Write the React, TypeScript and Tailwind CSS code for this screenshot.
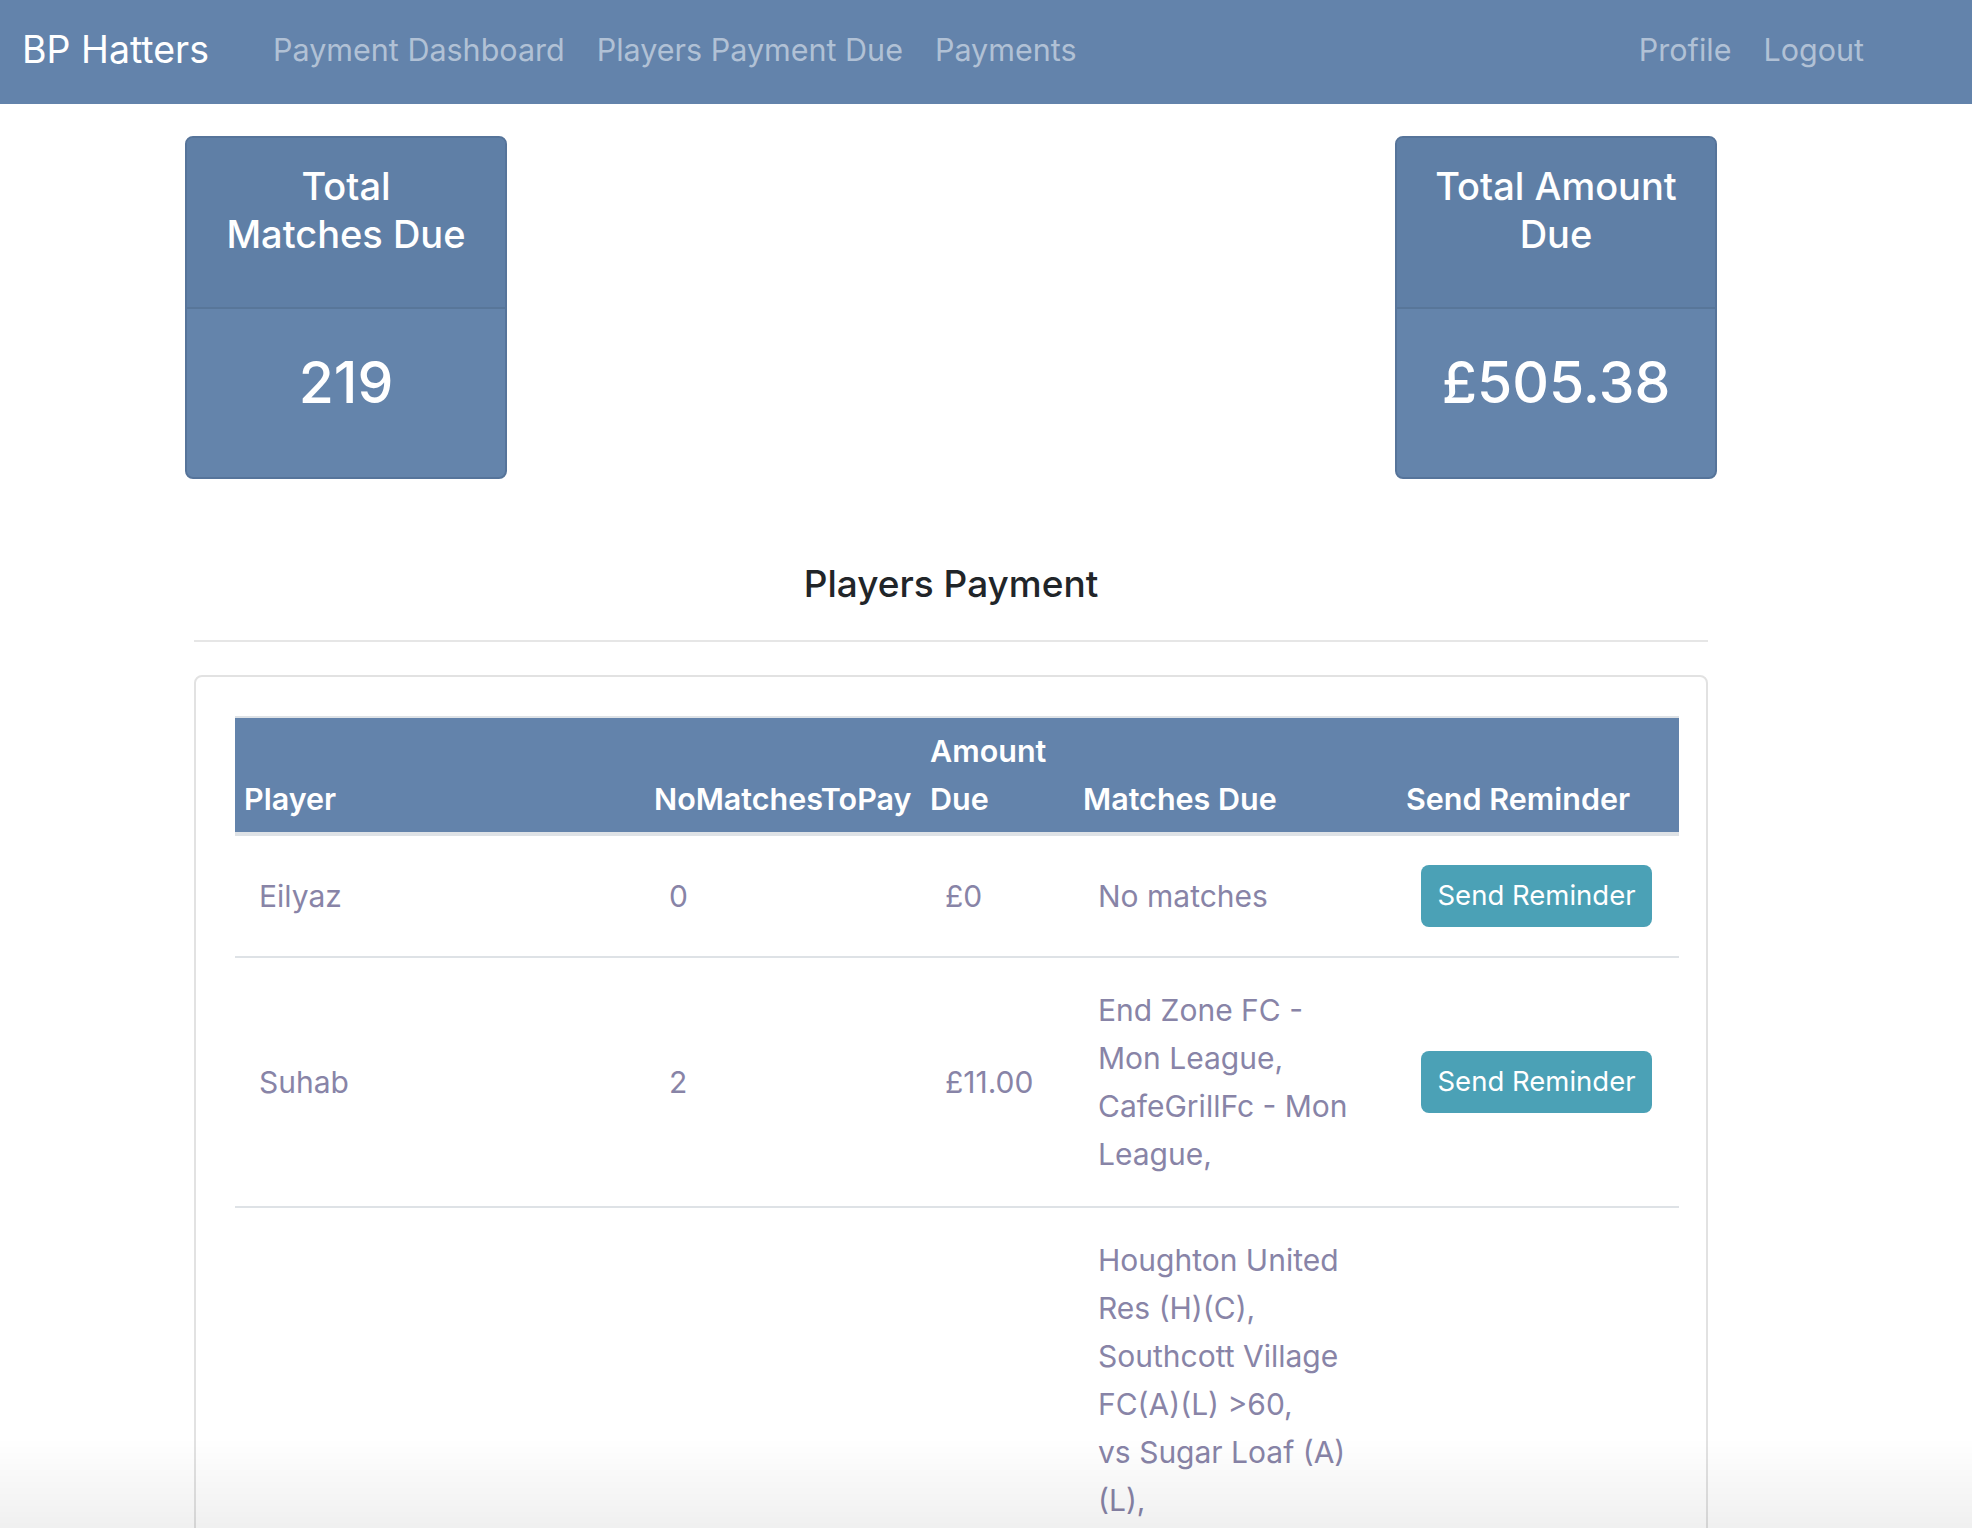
import React from "react";

type Row = {
  player: string;
  count: string;
  amount: string;
  matches: string[];
};

const rows: Row[] = [
  { player: "Eilyaz", count: "0", amount: "£0", matches: ["No matches"] },
  {
    player: "Suhab",
    count: "2",
    amount: "£11.00",
    matches: ["End Zone FC -", "Mon League,", "CafeGrillFc - Mon", "League,"],
  },
  {
    player: "Ahmed",
    count: "7",
    amount: "£38.50",
    matches: [
      "Houghton United",
      "Res (H)(C),",
      "Southcott Village",
      "FC(A)(L) >60,",
      "vs Sugar Loaf (A)",
      "(L),",
      "Woodside Rangers",
      "(H)(L),",
      "Barton Athletic",
      "(A)(C),",
      "Stopsley Park FC",
      "(H)(L) >60,",
      "Wigmore Vets (A)",
      "(L),",
    ],
  },
];

function StatCard({ title, value }: { title: React.ReactNode; value: string }) {
  return (
    <div className="w-[322px] h-[343px] rounded-[8px] border-2 border-[#56749a] bg-[#6484ab] overflow-hidden flex flex-col">
      <div className="h-[171px] shrink-0 bg-[#5f7fa6] border-b-2 border-[#587699] pt-[24px] px-[20px] text-center text-white text-[38px] font-medium leading-[48px]">
        {title}
      </div>
      <div className="flex-1 flex items-center justify-center pb-[22px] text-white text-[57px] font-medium leading-none">
        {value}
      </div>
    </div>
  );
}

export default function App() {
  return (
    <div className="min-h-screen bg-white font-['Inter','Liberation_Sans',sans-serif]">
      {/* top navigation */}
      <nav className="h-[104px] bg-[#6383ab] flex items-center pl-[22px] pr-[108px] pb-[4px]">
        <span className="text-white text-[37.5px] leading-none">BP Hatters</span>
        <div className="ml-[64px] flex items-center gap-[32px] text-[30.5px] leading-none text-[#b1c1d5]">
          <a>Payment Dashboard</a>
          <a>Players Payment Due</a>
          <a>Payments</a>
        </div>
        <div className="ml-auto flex items-center gap-[32px] text-[30.5px] leading-none text-[#b1c1d5]">
          <a>Profile</a>
          <a>Logout</a>
        </div>
      </nav>

      <div className="ml-[185px] w-[1532px]">
        <div className="mt-[32px] flex justify-between">
          <StatCard
            title={
              <>
                Total
                <br />
                Matches Due
              </>
            }
            value="219"
          />
          <StatCard
            title={
              <>
                Total Amount
                <br />
                Due
              </>
            }
            value="£505.38"
          />
        </div>

        <div className="mx-[9px]">
          <h4 className="mt-[81px] text-center text-[37px] font-medium leading-[48px] text-[#212529]">
            Players Payment
          </h4>
          <hr className="mt-[32px] border-t-2 border-[#e6e6e6]" />

          <div className="mt-[33px] rounded-[8px] border-2 border-[#e2e2e2] pt-[39px] pl-[39px] pr-[25px]">
            <table className="w-[1444px] table-fixed border-collapse text-left">
              <colgroup>
                <col className="w-[410px]" />
                <col className="w-[276px]" />
                <col className="w-[153px]" />
                <col className="w-[323px]" />
                <col className="w-[282px]" />
              </colgroup>
              <thead>
                <tr className="bg-[#6383ab] border-t-2 border-t-[#dee2e6] border-b-4 border-b-[#dee2e6] text-white text-[30.5px] font-semibold leading-[48px]">
                  <th className="px-[9px] py-[9px] align-bottom font-semibold">Player</th>
                  <th className="px-[9px] py-[9px] align-bottom font-semibold whitespace-nowrap">NoMatchesToPay</th>
                  <th className="px-[9px] py-[9px] align-bottom font-semibold">
                    Amount
                    <br />
                    Due
                  </th>
                  <th className="px-[9px] py-[9px] align-bottom font-semibold">Matches Due</th>
                  <th className="px-[9px] py-[9px] align-bottom font-semibold whitespace-nowrap">Send Reminder</th>
                </tr>
              </thead>
              <tbody className="text-[30px] leading-[48px] text-[#8884a7]">
                {rows.map((r) => (
                  <tr key={r.player} className="border-b-2 border-[#dee2e6]">
                    <td className="px-[24px] py-[28px] align-middle">{r.player}</td>
                    <td className="px-[24px] py-[28px] align-middle">{r.count}</td>
                    <td className="px-[24px] py-[28px] align-middle">{r.amount}</td>
                    <td className="px-[24px] py-[28px] align-middle">
                      {r.matches.map((m, i) => (
                        <span key={i} className="block whitespace-nowrap">
                          {m}
                        </span>
                      ))}
                    </td>
                    <td className="px-[24px] py-[28px] align-middle">
                      <button className="my-[1px] w-[231px] h-[62px] rounded-[8px] bg-[#4ba1b6] text-white text-[27.5px] leading-none">
                        Send Reminder
                      </button>
                    </td>
                  </tr>
                ))}
              </tbody>
            </table>
          </div>
        </div>
      </div>

      {/* soft shade along the bottom edge of the window */}
      <div className="pointer-events-none fixed inset-x-0 bottom-0 h-[90px] bg-gradient-to-b from-transparent to-black/[0.06]" />
    </div>
  );
}
